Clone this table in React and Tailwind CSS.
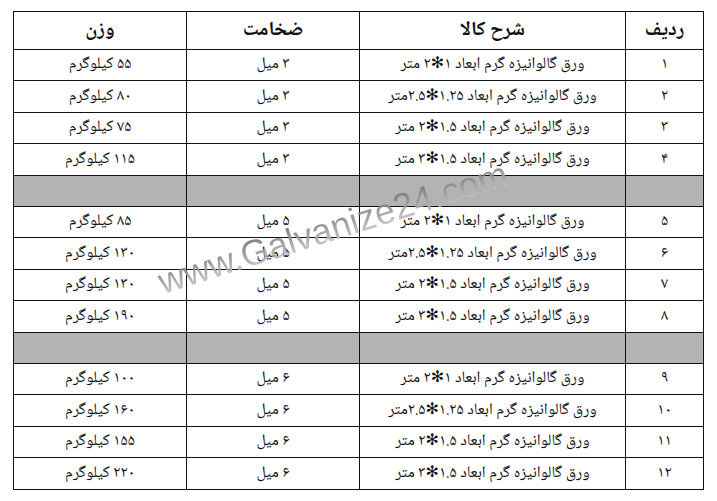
const groups = [
  {
    thick: "۳ میل",
    rows: [
      ["۱", "ورق گالوانیزه گرم ابعاد ۱✻۲ متر", "۵۵ کیلوگرم"],
      ["۲", "ورق گالوانیزه گرم ابعاد ۱.۲۵✻۲.۵متر", "۸۰ کیلوگرم"],
      ["۳", "ورق گالوانیزه گرم ابعاد ۱.۵✻۲ متر", "۷۵ کیلوگرم"],
      ["۴", "ورق گالوانیزه گرم ابعاد ۱.۵✻۳ متر", "۱۱۵ کیلوگرم"],
    ],
  },
  {
    thick: "۵ میل",
    rows: [
      ["۵", "ورق گالوانیزه گرم ابعاد ۱✻۲ متر", "۸۵ کیلوگرم"],
      ["۶", "ورق گالوانیزه گرم ابعاد ۱.۲۵✻۲.۵متر", "۱۳۰ کیلوگرم"],
      ["۷", "ورق گالوانیزه گرم ابعاد ۱.۵✻۲ متر", "۱۳۰ کیلوگرم"],
      ["۸", "ورق گالوانیزه گرم ابعاد ۱.۵✻۳ متر", "۱۹۰ کیلوگرم"],
    ],
  },
  {
    thick: "۶ میل",
    rows: [
      ["۹", "ورق گالوانیزه گرم ابعاد ۱✻۲ متر", "۱۰۰ کیلوگرم"],
      ["۱۰", "ورق گالوانیزه گرم ابعاد ۱.۲۵✻۲.۵متر", "۱۶۰ کیلوگرم"],
      ["۱۱", "ورق گالوانیزه گرم ابعاد ۱.۵✻۲ متر", "۱۵۵ کیلوگرم"],
      ["۱۲", "ورق گالوانیزه گرم ابعاد ۱.۵✻۳ متر", "۲۲۰ کیلوگرم"],
    ],
  },
];

const cell = "border border-[#111] text-center align-middle p-0";

export default function App() {
  return (
    <div
      className="relative w-[717px] h-[501px] bg-white pt-[11px] pl-[13px] overflow-hidden"
      style={{ fontFamily: "'Noto Naskh Arabic', 'Noto Sans Arabic', 'DejaVu Sans', sans-serif" }}
    >
      <table dir="rtl" className="w-[690px] table-fixed border-collapse text-[16px] text-[#111]">
        <colgroup>
          <col className="w-[78px]" />
          <col className="w-[266px]" />
          <col className="w-[173px]" />
          <col className="w-[173px]" />
        </colgroup>
        <thead>
          <tr className="h-[38px] text-[20px] font-bold">
            <th className={cell}>ردیف</th>
            <th className={cell}>شرح کالا</th>
            <th className={cell}>ضخامت</th>
            <th className={cell}>وزن</th>
          </tr>
        </thead>
        <tbody>
          {groups.map((g, gi) => (
            <>
              {gi > 0 && (
                <tr key={"sep" + gi} className="h-[31px] bg-[#b3b3b3]">
                  <td className={cell}></td>
                  <td className={cell}></td>
                  <td className={cell}></td>
                  <td className={cell}></td>
                </tr>
              )}
              {g.rows.map((r, i) => (
                <tr key={r[0]} className={i % 2 === 1 ? "h-[32px]" : "h-[31px]"}>
                  <td className={cell}>{r[0]}</td>
                  <td className={cell}>{r[1]}</td>
                  <td className={cell}>{g.thick}</td>
                  <td className={cell}>{r[2]}</td>
                </tr>
              ))}
            </>
          ))}
        </tbody>
      </table>

      <div
        className="absolute left-[333px] top-[228px] -translate-x-1/2 -translate-y-1/2 -rotate-[17.5deg] whitespace-nowrap text-[36px] leading-none bg-gradient-to-b from-[#6a6a6a] to-[#d2d2d2] bg-clip-text text-transparent opacity-90 pointer-events-none"
        style={{ fontFamily: "'Liberation Sans', Arial, sans-serif" }}
      >
        www.Galvanize24.com
      </div>
    </div>
  );
}
